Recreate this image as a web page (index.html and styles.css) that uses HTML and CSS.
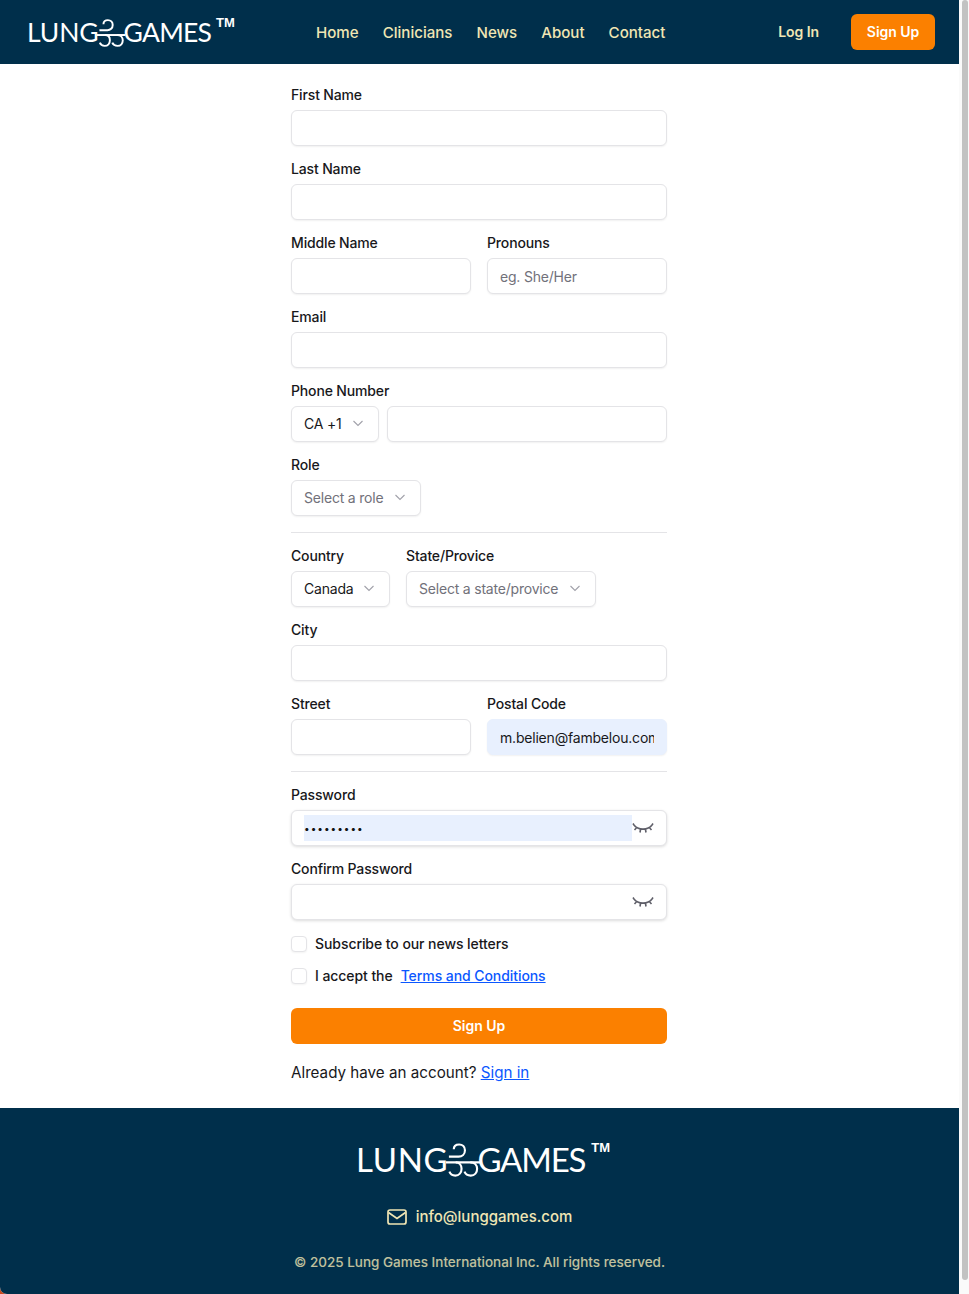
FILE: index.html
```html
<!DOCTYPE html>
<html lang="en">
<head>
<meta charset="utf-8">
<title>Sign Up - Lung Games</title>
<link rel="stylesheet" href="styles.css">
</head>
<body>
<svg class="defs" width="0" height="0" aria-hidden="true">
  <symbol id="swirl" viewBox="0 0 36 34">
    <path d="M8 6C8 3 10 1 13.500 1C17 1 19.500 3.500 19.500 7C19.500 11 16.500 13.500 13 13.500H3" />
    <path d="M0 19.500H35" />
    <path d="M10 19.500C14 19.500 16 22.500 16 26C16 30 13.500 33 9.500 33C6.500 33 4.500 31.500 3.500 29" />
    <path d="M25 19.500C29.500 19.500 32 22.500 32 26C32 30 29.500 33 25.500 33C22.500 33 20 31.500 19 29" />
  </symbol>
</svg>
<div class="window">
  <div class="app">
    <header class="topbar">
      <a class="logo logo-top" href="#"><span class="lung">LUNG</span><svg class="swirl"><use href="#swirl"/></svg><span class="games">GAMES</span><sup class="tm">TM</sup></a>
      <nav class="nav">
        <a href="#">Home</a>
        <a href="#">Clinicians</a>
        <a href="#">News</a>
        <a href="#">About</a>
        <a href="#">Contact</a>
      </nav>
      <div class="auth">
        <a class="login" href="#">Log In</a>
        <a class="signup-small" href="#">Sign Up</a>
      </div>
    </header>

    <main class="main">
      <form class="form">
        <div class="field"><label>First Name</label><input class="input" type="text"></div>
        <div class="field"><label>Last Name</label><input class="input" type="text"></div>
        <div class="row two">
          <div class="field"><label>Middle Name</label><input class="input" type="text"></div>
          <div class="field"><label>Pronouns</label><input class="input" type="text" placeholder="eg. She/Her"></div>
        </div>
        <div class="field"><label>Email</label><input class="input" type="text"></div>
        <div class="field">
          <label>Phone Number</label>
          <div class="row phone">
            <div class="select code"><span>CA +1</span><svg class="chev" viewBox="0 0 10 10"><path d="M.5 3l4.500 4.500L9.500 3"/></svg></div>
            <input class="input" type="text">
          </div>
        </div>
        <div class="field">
          <label>Role</label>
          <div class="select muted role"><span>Select a role</span><svg class="chev" viewBox="0 0 10 10"><path d="M.5 3l4.500 4.500L9.500 3"/></svg></div>
        </div>
        <hr class="rule">
        <div class="row geo">
          <div class="field">
            <label>Country</label>
            <div class="select country"><span>Canada</span><svg class="chev" viewBox="0 0 10 10"><path d="M.5 3l4.500 4.500L9.500 3"/></svg></div>
          </div>
          <div class="field">
            <label>State/Provice</label>
            <div class="select muted state"><span>Select a state/provice</span><svg class="chev" viewBox="0 0 10 10"><path d="M.5 3l4.500 4.500L9.500 3"/></svg></div>
          </div>
        </div>
        <div class="field"><label>City</label><input class="input" type="text"></div>
        <div class="row two">
          <div class="field"><label>Street</label><input class="input" type="text"></div>
          <div class="field"><label>Postal Code</label><input class="input filled" type="text" value="m.belien@fambelou.com"></div>
        </div>
        <hr class="rule">
        <div class="field">
          <label>Password</label>
          <div class="password">
            <div class="dots">•••••••••</div>
            <svg class="eye" viewBox="0 0 22 14"><path d="M2 3C6 8.500 16 8.500 20 3M2 3L1 1.500M20 3L21 1.500M4.500 5.800L2.500 8M8.500 7.500L8 10.500M13.500 7.500L14 10.500M17.500 5.800L19.500 8"/></svg>
          </div>
        </div>
        <div class="field">
          <label>Confirm Password</label>
          <div class="password">
            <div class="dots empty"></div>
            <svg class="eye" viewBox="0 0 22 14"><path d="M2 3C6 8.500 16 8.500 20 3M2 3L1 1.500M20 3L21 1.500M4.500 5.800L2.500 8M8.500 7.500L8 10.500M13.500 7.500L14 10.500M17.500 5.800L19.500 8"/></svg>
          </div>
        </div>
        <div class="checks">
          <div class="check"><span class="box"></span><span class="check-text">Subscribe to our news letters</span></div>
          <div class="check"><span class="box"></span><span class="check-text">I accept the</span><a class="link terms check-text" href="#">Terms and Conditions</a></div>
        </div>
        <button class="submit" type="button">Sign Up</button>
        <p class="already">Already have an account? <a class="link" href="#">Sign in</a></p>
      </form>
    </main>

    <footer class="footer">
      <a class="logo logo-foot" href="#"><span class="lung">LUNG</span><svg class="swirl"><use href="#swirl"/></svg><span class="games">GAMES</span><sup class="tm">TM</sup></a>
      <a class="mail" href="#">
        <svg class="mail-icon" viewBox="0 0 20 16"><rect x="1" y="1" width="18" height="14" rx="2"/><path d="M1.500 3.500L10 9.500L18.500 3.500"/></svg>
        <span>info@lunggames.com</span>
      </a>
      <p class="copy">© 2025 Lung Games International Inc. All rights reserved.</p>
    </footer>
  </div>
  <div class="scrollbar"><div class="thumb"></div></div>
</div>
</body>
</html>
```
FILE: styles.css
```css
* { box-sizing: border-box; }
html, body { margin: 0; padding: 0; height: 1294px; overflow: hidden; }
body { background: #c9481e; font-family: Inter, "Liberation Sans", sans-serif; color: #18181b; }
a { text-decoration: none; color: inherit; }
.defs { position: absolute; }

.window { display: flex; height: 1294px; background: #fff; border-bottom-left-radius: 7px; overflow: hidden; }
.app { width: 959px; display: flex; flex-direction: column; }
.scrollbar { width: 10px; background: #fafafa; padding: 0 1px 14px 3px; }
.thumb { height: 100%; background: #c2c2c2; border-radius: 3px; }

.topbar { height: 64px; background: #002f4b; display: flex; align-items: center; padding: 0 24px 0 27px; flex: none; }
.logo { display: flex; align-items: center; color: #fff; font-family: Lato, sans-serif; font-weight: 400; line-height: 1; }
.swirl { fill: none; stroke: #fff; flex: none; }
.tm { font-family: "Liberation Sans", sans-serif; font-weight: 700; line-height: 1; align-self: flex-start; position: relative; }
.logo-top { font-size: 26.500px; width: 208px; }
.logo-top .lung { letter-spacing: -.1px; }
.logo-top .games { letter-spacing: -.8px; }
.logo-top .swirl { width: 29px; height: 28px; margin: 2px -2px 0 -2px; stroke-width: 2.400; }
.logo-top .tm { font-size: 13px; margin-left: 5px; top: -1px; }
.logo-foot { font-size: 33px; justify-content: center; height: 36px; margin-left: 7px; }
.logo-foot .lung { letter-spacing: .7px; }
.logo-foot .games { letter-spacing: -1.200px; }
.logo-foot .swirl { width: 35px; height: 34px; margin: 2px -4px 0 -2px; stroke-width: 2.200; }
.logo-foot .tm { font-size: 13px; margin-left: 6px; top: 0; }

.nav { display: flex; gap: 24px; margin-left: 81px; color: #f0e6b4; font-size: 15.100px; font-weight: 500; }
.auth { margin-left: auto; display: flex; align-items: center; gap: 32px; font-size: 14px; font-weight: 600; letter-spacing: -.05px; }
.login { color: #f0e6b4; padding-bottom: 1px; }
.signup-small { background: #fb8000; color: #fff; height: 36px; width: 84px; display: flex; align-items: center; justify-content: center; border-radius: 6px; padding-bottom: 1px; }

.main { flex: 1; display: flex; justify-content: center; padding-right: 1px; }
.form { width: 376px; padding-top: 21px; display: flex; flex-direction: column; gap: 13px; }
.field { display: flex; flex-direction: column; min-width: 0; }
.field label { font-size: 14px; line-height: 20px; font-weight: 500; margin-bottom: 5px; letter-spacing: -.15px; }
.input, .select, .password { height: 36px; border: 1px solid #e4e4e7; border-radius: 6px; background: #fff; box-shadow: 0 1px 2px rgba(0,0,0,.06); font: 400 14px Inter, sans-serif; letter-spacing: -.2px; color: #18181b; }
.input { width: 100%; padding: 0 12px; outline: none; }
.input::placeholder { color: #71717a; opacity: 1; }
.input.filled { background: #e8f0fe; border-color: #e8f0fe; }
.row { display: flex; }
.two { gap: 16px; }
.two > .field { width: 180px; }
.phone { gap: 8px; }
.geo { gap: 16px; }
.select { display: inline-flex; align-items: center; justify-content: space-between; padding: 0 15px 2px 12px; flex: none; }
.select.muted { color: #71717a; }
.code { width: 88px; }
.role { width: 130px; }
.country { width: 99px; }
.state { width: 190px; }
.chev { width: 10px; height: 10px; fill: none; stroke: #a1a1aa; stroke-width: 1.100; flex: none; }
.rule { width: 100%; border: 0; border-top: 1px solid #e4e4e7; margin: 3px 0 0; height: 1px; }

.password { display: flex; align-items: center; padding: 0 12px; box-shadow: 0 1px 3px rgba(0,0,0,.14); }
.dots { width: 328px; height: 26px; background: #e8f0fe; font-size: 10px; letter-spacing: 1px; line-height: 27px; color: #111; flex: none; }
.dots.empty { background: transparent; }
.eye { width: 22px; height: 14px; fill: none; stroke: #5f5f69; stroke-width: 1.600; margin-top: 2px; flex: none; }

.checks { display: flex; flex-direction: column; gap: 12px; margin-top: 1px; }
.check { display: flex; align-items: center; height: 20px; font-size: 14px; font-weight: 500; letter-spacing: -.07px; }
.check-text { position: relative; top: -1px; }
.box { width: 16px; height: 16px; border: 1px solid #e4e4e7; border-radius: 4px; background: #fff; margin-right: 8px; box-shadow: 0 1px 2px rgba(0,0,0,.05); }
.link { color: #0b57ff; text-decoration: underline; }
.terms { margin-left: 8px; }
.submit { height: 36px; width: 100%; background: #fb8000; color: #fff; border: 0; border-radius: 6px; font: 600 14px Inter, sans-serif; margin-top: 9px; padding: 0 0 2px; }
.already { margin: 4px 0 0; font-size: 15.200px; line-height: 24px; }

.footer { height: 186px; background: #002f4b; display: flex; flex-direction: column; align-items: center; flex: none; padding-top: 33px; }
.mail { display: flex; align-items: center; gap: 9px; color: #f0e6b4; font-size: 15px; font-weight: 500; margin-top: 28px; line-height: 24px; }
.mail-icon { width: 20px; height: 16px; fill: none; stroke: #f0e6b4; stroke-width: 1.700; }
.copy { margin: 23px 0 0; font-size: 13.500px; line-height: 20px; font-weight: 500; color: #f0e6b4; opacity: .8; }
```
